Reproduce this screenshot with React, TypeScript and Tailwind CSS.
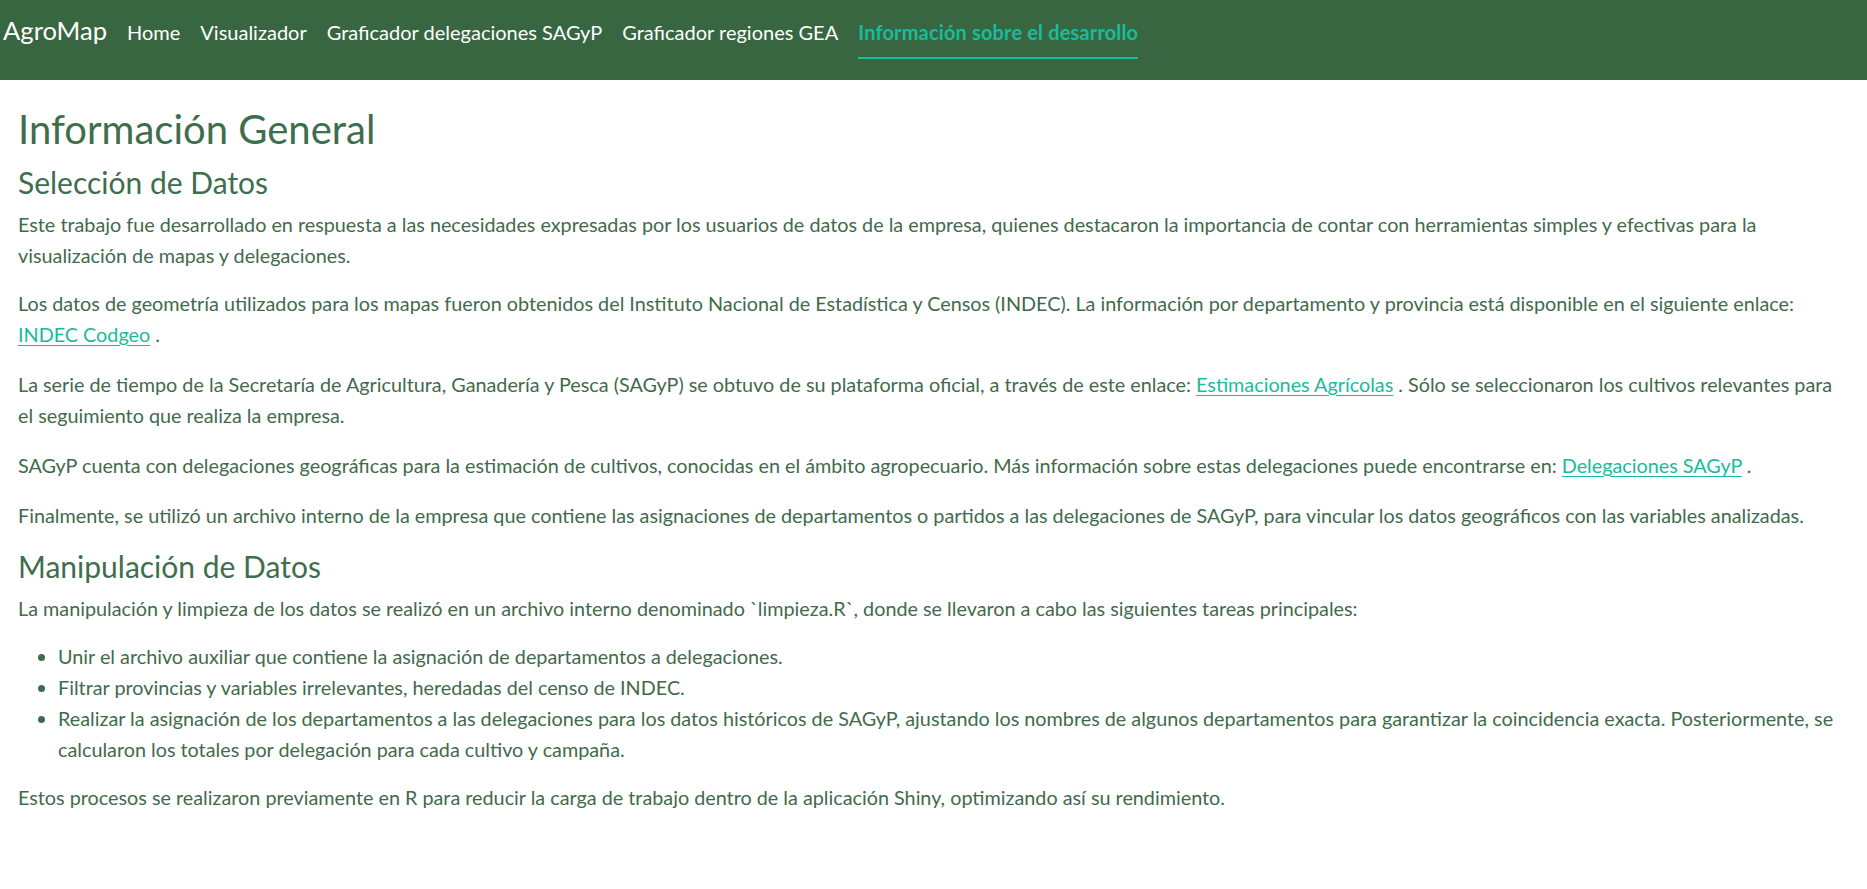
const navItems = [
  { label: "Home", active: false },
  { label: "Visualizador", active: false },
  { label: "Graficador delegaciones SAGyP", active: false },
  { label: "Graficador regiones GEA", active: false },
  { label: "Información sobre el desarrollo", active: true },
];

function Link({ children }: { children: React.ReactNode }) {
  return (
    <a href="#" className="text-[#18bc9c] underline underline-offset-[3px]">
      {children}
    </a>
  );
}

export default function App() {
  return (
    <div className="min-h-screen bg-white font-['Lato','Noto_Sans',sans-serif] text-[19.8px] leading-[31px] text-[#3f6b4c]">
      <nav className="h-[80px] bg-[#386641] flex items-baseline gap-5 pl-[3px] pt-[12px]">
        <a href="#" className="text-[25.6px] leading-[37px] text-white">
          AgroMap
        </a>
        {navItems.map((item) => (
          <a
            key={item.label}
            href="#"
            className={
              item.active
                ? "text-[20px] leading-[28px] pb-[11px] border-b-2 border-[#18bc9c] text-[#18bc9c] font-bold tracking-[0.15px]"
                : "text-[20px] leading-[28px] pb-[11px] border-b-2 border-transparent text-white"
            }
          >
            {item.label}
          </a>
        ))}
      </nav>

      <main className="px-[18px] pt-[25px]">
        <h1 className="text-[40px] leading-[48px] mb-[11px] text-[#3e6e4d]">
          Información General
        </h1>
        <h2 className="text-[30px] leading-[36px] mb-[9px] text-[#3e6e4d]">
          Selección de Datos
        </h2>
        <p className="mb-[17px]">
          Este trabajo fue desarrollado en respuesta a las necesidades expresadas por los
          usuarios de datos de la empresa, quienes destacaron la importancia de contar con
          herramientas simples y efectivas para la visualización de mapas y delegaciones.
        </p>
        <p className="mb-[19px]">
          Los datos de geometría utilizados para los mapas fueron obtenidos del Instituto
          Nacional de Estadística y Censos (INDEC). La información por departamento y
          provincia está disponible en el siguiente enlace: <Link>INDEC Codgeo</Link> .
        </p>
        <p className="mb-[19px]">
          La serie de tiempo de la Secretaría de Agricultura, Ganadería y Pesca (SAGyP) se
          obtuvo de su plataforma oficial, a través de este enlace:{" "}
          <Link>Estimaciones Agrícolas</Link> . Sólo se seleccionaron los cultivos relevantes
          para el seguimiento que realiza la empresa.
        </p>
        <p className="mb-[19px]">
          SAGyP cuenta con delegaciones geográficas para la estimación de cultivos, conocidas
          en el ámbito agropecuario. Más información sobre estas delegaciones puede encontrarse
          en: <Link>Delegaciones SAGyP</Link> .
        </p>
        <p className="mb-[18px]">
          Finalmente, se utilizó un archivo interno de la empresa que contiene las asignaciones
          de departamentos o partidos a las delegaciones de SAGyP, para vincular los datos
          geográficos con las variables analizadas.
        </p>

        <h2 className="text-[30px] leading-[34px] mb-[10px] text-[#3e6e4d]">
          Manipulación de Datos
        </h2>
        <p className="mb-[17px]">
          La manipulación y limpieza de los datos se realizó en un archivo interno denominado
          `limpieza.R`, donde se llevaron a cabo las siguientes tareas principales:
        </p>
        <ul className="list-disc pl-[40px] mb-[17px]">
          <li>Unir el archivo auxiliar que contiene la asignación de departamentos a delegaciones.</li>
          <li>Filtrar provincias y variables irrelevantes, heredadas del censo de INDEC.</li>
          <li>
            Realizar la asignación de los departamentos a las delegaciones para los datos
            históricos de SAGyP, ajustando los nombres de algunos departamentos para garantizar
            la coincidencia exacta. Posteriormente, se calcularon los totales por delegación
            para cada cultivo y campaña.
          </li>
        </ul>
        <p className="mb-[19px]">
          Estos procesos se realizaron previamente en R para reducir la carga de trabajo dentro
          de la aplicación Shiny, optimizando así su rendimiento.
        </p>
      </main>
    </div>
  );
}
